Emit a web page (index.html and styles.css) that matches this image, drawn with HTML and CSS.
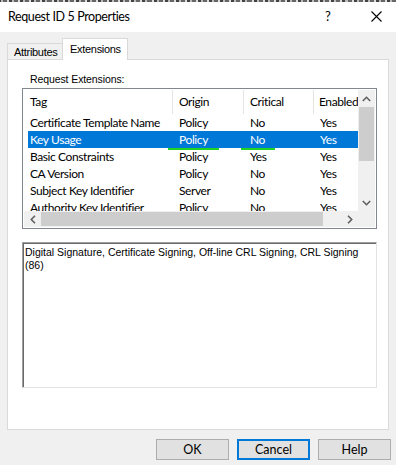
FILE: index.html
```html
<!DOCTYPE html>
<html lang="en">
<head>
    <meta charset="UTF-8">
    <title>Request ID 5 Properties</title>
    <link rel="stylesheet" href="styles.css">
</head>
<body>
    <div class="window">
        <div class="titlebar">
            <span class="title">Request ID 5 Properties</span>
            <span class="help-btn">?</span>
            <span class="close-btn">
                <svg width="11" height="11" viewBox="0 0 11 11"><path d="M0.5 0.5 L10.5 10.5 M10.5 0.5 L0.5 10.5" stroke="#000" stroke-width="1.1" fill="none"/></svg>
            </span>
        </div>

        <div class="tabs">
            <div class="tab">Attributes</div>
            <div class="tab active">Extensions</div>
        </div>

        <div class="panel">
            <div class="group-label">Request Extensions:</div>

            <div class="list">
                <div class="view">
                    <div class="head">
                        <div class="hcell c1">Tag</div>
                        <div class="hcell c2">Origin</div>
                        <div class="hcell c3">Critical</div>
                        <div class="hcell c4">Enabled</div>
                    </div>
                    <div class="row">
                        <div class="cell c1">Certificate Template Name</div>
                        <div class="cell c2">Policy</div>
                        <div class="cell c3">No</div>
                        <div class="cell c4">Yes</div>
                    </div>
                    <div class="row selected">
                        <div class="cell c1">Key Usage</div>
                        <div class="cell c2">Policy<span class="mark mark-origin"></span></div>
                        <div class="cell c3">No<span class="mark mark-critical"></span></div>
                        <div class="cell c4">Yes</div>
                    </div>
                    <div class="row">
                        <div class="cell c1">Basic Constraints</div>
                        <div class="cell c2">Policy</div>
                        <div class="cell c3">Yes</div>
                        <div class="cell c4">Yes</div>
                    </div>
                    <div class="row">
                        <div class="cell c1">CA Version</div>
                        <div class="cell c2">Policy</div>
                        <div class="cell c3">No</div>
                        <div class="cell c4">Yes</div>
                    </div>
                    <div class="row">
                        <div class="cell c1">Subject Key Identifier</div>
                        <div class="cell c2">Server</div>
                        <div class="cell c3">No</div>
                        <div class="cell c4">Yes</div>
                    </div>
                    <div class="row">
                        <div class="cell c1">Authority Key Identifier</div>
                        <div class="cell c2">Policy</div>
                        <div class="cell c3">No</div>
                        <div class="cell c4">Yes</div>
                    </div>
                </div>

                <div class="vscroll">
                    <div class="arrow">
                        <svg width="9" height="6" viewBox="0 0 9 6"><path d="M0.8 5 L4.5 1.3 L8.2 5" stroke="#606060" stroke-width="1.6" fill="none"/></svg>
                    </div>
                    <div class="track">
                        <div class="thumb-v"></div>
                    </div>
                    <div class="arrow">
                        <svg width="9" height="6" viewBox="0 0 9 6"><path d="M0.8 1 L4.5 4.7 L8.2 1" stroke="#606060" stroke-width="1.6" fill="none"/></svg>
                    </div>
                </div>

                <div class="hscroll">
                    <div class="arrow">
                        <svg width="6" height="9" viewBox="0 0 6 9"><path d="M5 0.8 L1.3 4.5 L5 8.2" stroke="#606060" stroke-width="1.6" fill="none"/></svg>
                    </div>
                    <div class="track">
                        <div class="thumb-h"></div>
                    </div>
                    <div class="arrow">
                        <svg width="6" height="9" viewBox="0 0 6 9"><path d="M1 0.8 L4.7 4.5 L1 8.2" stroke="#606060" stroke-width="1.6" fill="none"/></svg>
                    </div>
                </div>

                <div class="corner"></div>
            </div>

            <div class="detail">Digital Signature, Certificate Signing, Off-line CRL Signing, CRL Signing<br>(86)</div>
        </div>

        <div class="buttons">
            <button class="btn">OK</button>
            <button class="btn default">Cancel</button>
            <button class="btn">Help</button>
        </div>
    </div>
</body>
</html>
```

FILE: styles.css
```css
body {
    margin: 0;
    padding: 0;
    background: #f0f0f0;
    font-family: Lato, "Noto Sans", sans-serif;
    font-size: 12px;
    letter-spacing: -0.4px;
    color: #000;
}
.window {
    width: 396px;
    height: 465px;
    overflow: hidden;
    background: #f0f0f0;
}
.titlebar {
    height: 30px;
    background: #fff;
    border-top: 2px solid #777;
    border-image: repeating-linear-gradient(90deg, #444 0 3px, #bbb 3px 5px, #666 5px 9px, #ddd 9px 11px) 2;
    display: flex;
    align-items: center;
    font-size: 12.5px;
}
.title {
    padding-left: 8px;
    flex: 1;
    padding-bottom: 1px;
}
.help-btn {
    width: 46px;
    font-size: 13px;
    padding-bottom: 2px;
}
.close-btn {
    width: 25px;
    display: flex;
    padding-bottom: 1px;
}

/* tabs */
.tabs {
    display: flex;
    align-items: flex-end;
    margin-top: 6px;
    padding-left: 7px;
    margin-bottom: -1px;
    font-family: "Liberation Sans", Arial, sans-serif;
    font-size: 11px;
    letter-spacing: -0.3px;
}
.tab {
    border: 1px solid #d9d9d9;
    border-bottom: none;
    box-sizing: border-box;
}
.tab:first-child {
    width: 55px;
    height: 17px;
    border-right: none;
    padding: 2px 0 0 6px;
}
.tab.active {
    width: 66px;
    height: 22px;
    background: #fff;
    padding: 4px 0 0 7px;
    position: relative;
    z-index: 1;
}

/* panel */
.panel {
    margin: 0 7px;
    height: 371px;
    box-sizing: border-box;
    background: #fff;
    border: 1px solid #d9d9d9;
    padding: 0 11px 0 14px;
}
.group-label {
    font-family: "Liberation Sans", Arial, sans-serif;
    font-size: 10.5px;
    letter-spacing: -0.1px;
    line-height: 13px;
    margin: 13px 0 2px 8px;
}

/* list view */
.list {
    height: 141px;
    box-sizing: border-box;
    border: 1px solid #828790;
    padding: 1px;
    display: grid;
    grid-template-columns: 1fr 17px;
    grid-template-rows: 1fr 16px;
    overflow: hidden;
}
.view {
    overflow: hidden;
    white-space: nowrap;
}
.head {
    display: flex;
    height: 24px;
}
.hcell {
    box-sizing: border-box;
    border-right: 1px solid #e5e5e5;
    padding-left: 6px;
    line-height: 23px;
    flex-shrink: 0;
}
.head .c1 { width: 149px; }
.c2 { width: 71px; }
.c3 { width: 70px; }
.c4 { width: 80px; }
.head .c4 { padding-left: 5px; }
.row {
    display: flex;
    height: 17px;
    line-height: 17px;
    margin-left: 4px;
    width: 400px;
}
.row .c1 {
    width: 145px;
    padding-left: 2px;
}
.cell {
    box-sizing: border-box;
    padding-left: 6px;
    flex-shrink: 0;
    position: relative;
}
.row.selected {
    background: #0078d7;
    color: #fff;
}
.mark {
    position: absolute;
    bottom: -2px;
    height: 2px;
    background: #22d422;
}
.mark-origin {
    left: -5px;
    width: 51px;
}
.mark-critical {
    left: -3px;
    width: 34px;
}

/* scrollbars */
.vscroll {
    background: #f0f0f0;
    display: flex;
    flex-direction: column;
}
.vscroll .arrow {
    height: 17px;
    display: flex;
    align-items: center;
    justify-content: center;
}
.vscroll .track {
    flex: 1;
    padding: 0 1px;
}
.thumb-v {
    height: 54px;
    background: #cdcdcd;
}
.hscroll {
    background: #f0f0f0;
    display: flex;
}
.hscroll .arrow {
    width: 17px;
    display: flex;
    align-items: center;
    justify-content: center;
}
.hscroll .track {
    flex: 1;
    padding: 1px 0;
}
.thumb-h {
    width: 282px;
    height: 100%;
    background: #cdcdcd;
}
.corner {
    background: #f0f0f0;
}

/* details box */
.detail {
    margin-top: 13px;
    height: 146px;
    box-sizing: border-box;
    border-top: 1px solid #a0a0a0;
    border-left: 1px solid #a0a0a0;
    border-right: 1px solid #e3e3e3;
    border-bottom: 1px solid #e3e3e3;
    box-shadow: inset 1px 1px 0 #696969;
    padding: 3px 2px;
    width: 355px;
    font-family: "Liberation Sans", Arial, sans-serif;
    font-size: 10.5px;
    letter-spacing: 0;
    line-height: 13px;
    white-space: nowrap;
}

/* dialog buttons */
.buttons {
    display: flex;
    justify-content: flex-end;
    gap: 8px;
    margin-top: 9px;
    padding-right: 5px;
}
.btn {
    width: 73px;
    height: 21px;
    box-sizing: border-box;
    background: #e1e1e1;
    border: 1px solid #adadad;
    font-family: Lato, "Noto Sans", sans-serif;
    font-size: 12.5px;
    color: #000;
    padding: 0;
}
.btn.default {
    border: 2px solid #0078d7;
}
```
